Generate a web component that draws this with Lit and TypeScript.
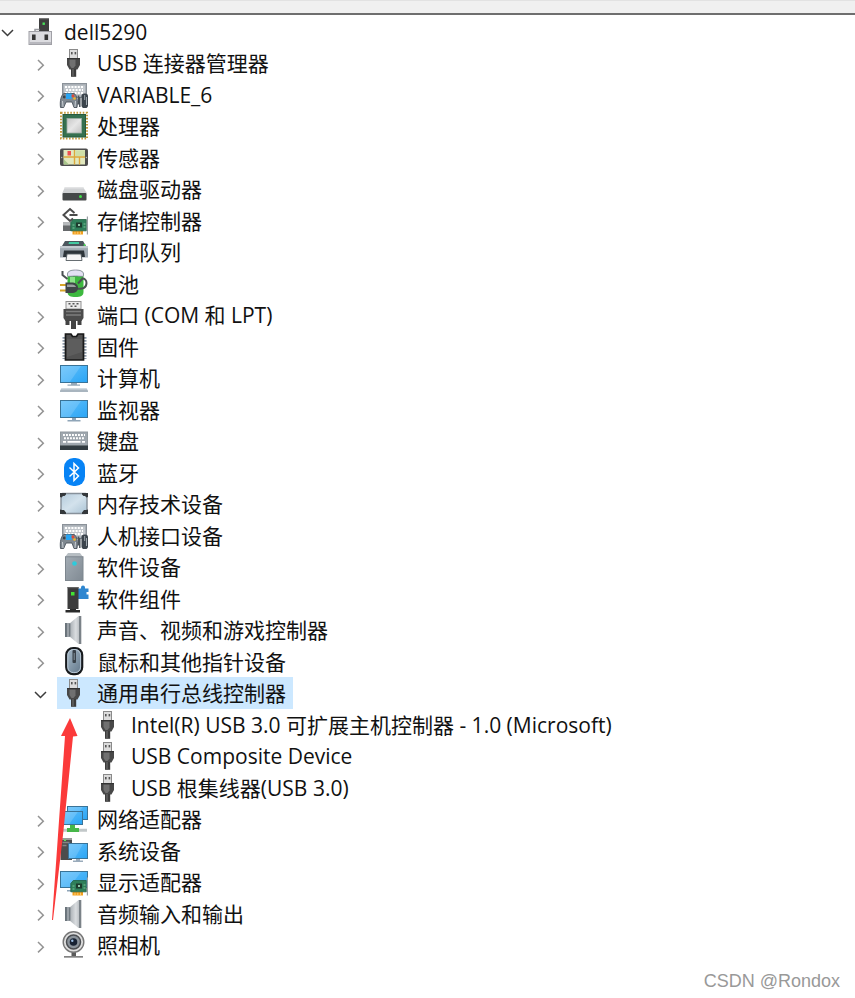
import { LitElement, html, svg, css } from "lit";
import { customElement, property, state } from "lit/decorators.js";
import { classMap } from "lit/directives/class-map.js";

const usb = svg`
  <rect x="9.5" y="0.5" width="8" height="9" fill="#dcdcdc" stroke="#8a8a8a"/>
  <rect x="11" y="3" width="1.6" height="2.4" fill="#555"/><rect x="14.6" y="3" width="1.6" height="2.4" fill="#555"/>
  <path d="M7 9h13v7l-2.500 4.500h-8L7 16z" fill="#484848"/>
  <path d="M9.500 10.500h6v6l-2 2.500h-2l-2-3z" fill="#707070"/>
  <path d="M7 9h13v1.2H7z" fill="#333"/>
  <rect x="11" y="20" width="5.2" height="7.8" fill="#3c3c3c"/><rect x="12.2" y="20" width="1.6" height="7.8" fill="#606060"/>`;

const screen = (x: number, y: number, w: number, h: number) => svg`
  <rect x=${x + 0.5} y=${y + 0.5} width=${w - 1} height=${h - 1} fill="url(#sky)" stroke="#3a7397"/>
  <path d="M${x + 1} ${y + h - 1}L${x + w * 0.35} ${y + h - 1}L${x + w * 0.75} ${y + 1}L${x + 1} ${y + 1}z" fill="#fff" opacity="0.16"/>`;

const card = svg`
  <path d="M12.500 23.500h10.500v4H12.500z" fill="#f3a01d"/>
  <path d="M15 24.500v3M17.800 24.500v3M20.500 24.500v3" stroke="#fbd68c" stroke-width="0.800"/>
  <path d="M10.800 15.500l2.500-3h13v11.300h-15.500z" fill="#2f7f5a" stroke="#225f43" stroke-width="0.800"/>
  <rect x="16" y="15.500" width="6" height="5" fill="#1d3a2d"/><rect x="18" y="17" width="2" height="2" fill="#8fc8a8"/>
  <path d="M12.500 18h2M12.500 21h2M23.500 17h2M23.500 20h2" stroke="#7cc79a"/>
  <rect x="26.800" y="9.500" width="1.200" height="18" fill="#9a9fa3"/>`;

const speaker = svg`
  <rect x="5.200" y="7" width="6" height="14" fill="#9aa1a7"/><rect x="5.200" y="7" width="1.500" height="14" fill="#5a646c"/>
  <path d="M9.500 7.500L18.500 0H20v28h-1.500l-9-7.500z" fill="url(#steel)"/>
  <path d="M9.800 7.500v13" stroke="#5f686f"/>
  <rect x="19" y="0" width="2.300" height="28" fill="#7b8288"/>`;

const hid = svg`
  <rect x="2.500" y="2.500" width="24" height="14" fill="#a9afb6" stroke="#8b9299"/>
  <path d="M4 4.500h21v10H4z" fill="#c3c8cd"/>
  <path d="M5 6h19M6 9h17M5 12h19" stroke="#fff" stroke-width="1.800" stroke-dasharray="2 1.200"/>
  <path d="M.5 26.500C-.3 20 1 14 4 12.500h10c3 1.500 4 7.500 3 14h-3l-2-5.500H6l-2.300 5.500z" fill="#7f8890" stroke="#4b545c" stroke-width="0.900"/>
  <path d="M2.500 20l.5 6M15.500 20L15 26" stroke="#c8cdd2"/>
  <rect x="6" y="12.500" width="5.500" height="5.500" fill="#29a4f2"/><circle cx="4.200" cy="16" r="1.400" fill="#38434d"/>
  <circle cx="13" cy="15" r="1.400" fill="#e04838"/><circle cx="14.500" cy="17.500" r="1.300" fill="#efb42b"/>
  <path d="M18.500 14.500v9M19.800 16v10" stroke="#4b545b" stroke-width="1.500"/>
  <rect x="21.500" y="12.500" width="6.500" height="14.500" rx="2.800" fill="#3b444c"/><path d="M24.700 14v5M26.500 16v8" stroke="#9ea7ae"/>`;

const icons = {
  usb, speaker, hid,
  root: svg`
    <rect x="12" y="0" width="10" height="14" fill="#3e3e3e"/><rect x="12" y="0" width="10" height="1.200" fill="#777"/>
    <rect x="15.500" y="4.500" width="2.400" height="2.400" fill="#47e257"/>
    <path d="M8 14V11.500h4.500" fill="none" stroke="#9b9ca1" stroke-width="1.500"/>
    <rect x="2" y="13.500" width="22.500" height="13" fill="#dcdce0" stroke="#a0a0a6"/>
    <path d="M2.500 24h21.500v2H2.500z" fill="#b8b8be"/>
    <rect x="5" y="16.500" width="3.600" height="5.500" fill="#353535"/><rect x="17.500" y="16.500" width="3.600" height="5.500" fill="#353535"/>`,
  cpu: svg`
    <rect x="1" y="0.800" width="26" height="25.800" fill="none" stroke="#c39b3e" stroke-width="2" stroke-dasharray="1.600 1.500"/>
    <rect x="3" y="2.500" width="22.500" height="22.500" fill="#35704f" stroke="#255a3d"/>
    <rect x="7" y="6.500" width="14.500" height="14.500" fill="url(#silver)" stroke="#9fb0a5" stroke-width="0.800"/>`,
  sensor: svg`
    <rect x="0" y="4.500" width="28" height="17.500" rx="2" fill="#4d4d4d"/>
    <rect x="3.500" y="6" width="21.500" height="14.500" fill="#e2e9bf"/>
    <path d="M3.500 13h21.500M14.500 6v14.500M19.500 13v7.500" stroke="#dda83b" stroke-width="1.400"/>
    <path d="M4 15.500l5 5H4z" fill="#a9c78c"/><path d="M15.500 6.500H25v5.500h-9.500z" fill="#cfe0a8"/>
    <rect x="7.500" y="7" width="3.500" height="4.500" fill="#ef5252"/>
    <circle cx="1.700" cy="13.500" r="0.700" fill="#bbb"/><circle cx="26.400" cy="13.500" r="0.700" fill="#bbb"/>`,
  disk: svg`
    <path d="M5 12h18l3.500 5.500v2h-24v-2z" fill="#cfd1d3"/><path d="M5 12h18l1 1.500H4z" fill="#e3e4e5"/>
    <rect x="2.500" y="18" width="24" height="7.500" rx="1" fill="#454849"/>
    <circle cx="20.500" cy="21.500" r="1.500" fill="#3ee047"/>`,
  storage: svg`
    <path d="M3 15.500h10v8.500H3z" fill="#66696b"/><path d="M3 15.500h10v3H3z" fill="#b7babc"/>
    <path d="M14.500 6L10 2 3.500 8l6.500 6 3-2.500M9.500 8h8" fill="none" stroke="#4b4b4b" stroke-width="2"/>${card}`,
  printer: svg`
    <path d="M5 3h18l3 5H2z" fill="#4c565d"/><path d="M9 4h10v2H8.500z" fill="#43c9a1"/>
    <path d="M0 8h28v11.500H0z" fill="#a0a9b1"/><path d="M0 8h28v2.200H0z" fill="#c3cad0"/>
    <path d="M4 12.500h20l1 6.500H3z" fill="#2d3439"/>
    <path d="M7 16h14l1 6.500H6z" fill="#f5f5f5" stroke="#565d62" stroke-width="0.900"/>
    <circle cx="24.500" cy="7" r="1" fill="#46df52"/>`,
  battery: svg`
    <path d="M7.500 4c0-3 4-4 8-4s8 1 8 4v18c0 4-3 5-8 5s-8-1-8-5z" fill="#3db83f"/>
    <path d="M7.500 4c0-3 4-4 8-4s8 1 8 4v1.500c0 1.500-4 .5-8 .5s-8 1-8-.5z" fill="#e3e1f2" stroke="#77768c" stroke-width="0.700"/>
    <path d="M10 7h5v6h-5z" fill="#8ee38a"/>
    <path d="M2.500 1v4l5 4M17 18.500c6 1 9.500-1 9.500-5.500 0-3-2-4.500-4-4.500l-4.500 5" fill="none" stroke="#4b5153" stroke-width="2"/>
    <path d="M0 15h7M0 20.500h7" stroke="#d7a528" stroke-width="2"/>
    <path d="M5.500 12.500h6c4 0 6.500 2 6.500 5.200 0 3.300-2.500 5.300-6.500 5.300h-6z" fill="#3f4547"/>
    <path d="M7 14.500h5c2 0 3.500 1 4 2.500H7z" fill="#9aa0a1"/>`,
  port: svg`
    <rect x="6" y="0.500" width="15" height="7.500" fill="#ededed" stroke="#919191"/>
    <path d="M8.500 2.700h2M12.500 2.700h2M16.500 2.700h2M10.500 5.200h2M14.500 5.200h2" stroke="#555" stroke-width="1.400"/>
    <path d="M3.500 8h20v9l-2 3H5.500l-2-3z" fill="#4c4c4c"/><path d="M6 10.500h15M6 14h15" stroke="#7d7d7d" stroke-width="1.500"/>
    <path d="M5.500 19h4v5h-4zM17.500 19h4v5h-4zM11 19h5v9h-5z" fill="#434343"/>`,
  firmware: svg`
    <path d="M4.500 4v22M24.500 4v22" stroke="#8f9cab" stroke-width="4" stroke-dasharray="1.700 1.300"/>
    <path d="M5.500 1h5.500l1.500 2.500h4L18 1h5.500v26h-18z" fill="#525252" stroke="#191919" stroke-width="1.700"/>
    <path d="M7 6h15v13L7 24z" fill="#666" opacity="0.600"/>`,
  computer: svg`${screen(0, 1, 28, 18)}
    <path d="M11 19h6v1.500h3v1.300H7.500v-1.300H11z" fill="#97a9b8"/>
    <path d="M2 24h24l2 2.500v1.500H0v-1.500z" fill="#a9b5bf"/><path d="M2 24h24l1 1.500H1z" fill="#d2dae0"/>`,
  monitor: svg`${screen(0, 4, 28, 18)}
    <path d="M12 22h4v2h4.500v1.500H7.500V24H12z" fill="#8fa5b8"/>`,
  keyboard: svg`
    <rect x="0.500" y="5" width="27" height="14" fill="#9fa7ae" stroke="#929a9f"/><path d="M0 18.500h28V23H0z" fill="#323c41"/>
    <path d="M3 8h22M4 11.300h20" stroke="#fff" stroke-width="1.900" stroke-dasharray="1.900 1.100"/>
    <path d="M3 14.800h3M22 14.800h3M7.500 14.800h13" stroke="#fff" stroke-width="1.700"/>`,
  bluetooth: svg`
    <rect x="4" y="-1" width="21" height="28" rx="9.500" fill="#0783f5"/>
    <path d="M9.500 8.500l9 8.500-4.500 4.500V4.500L18.500 9l-9 8.500" fill="none" stroke="#fff" stroke-width="1.500"/>`,
  memory: svg`
    <rect x="1" y="3.500" width="26" height="20" rx="1.500" fill="url(#ice)" stroke="#87919a" stroke-width="1.400"/>
    <path d="M0 7V3h6v1.500L4.500 6H3L1.500 7.500zM28 7V3h-6v1.500L23.500 6H25l1.500 1.500zM0 19.500V24h6v-1.500L4 20H2zM28 19.500V24h-6v-1.500L24 20h2z" fill="#34383b"/>`,
  softdev: svg`
    <path d="M8 0h12l3 4H5z" fill="#b7bec3"/><rect x="5.500" y="3.800" width="17.500" height="23.700" fill="url(#tower)" stroke="#7d868e"/>
    <circle cx="14.500" cy="10.500" r="2.300" fill="#2ccbdc"/>`,
  softcomp: svg`
    <path d="M18 3.500h3V2.500a2 2 0 0 1 4 0v1h3.500V7h-2v2.500h2V14H18v-3h-1.500V7H18z" fill="#2e86d0"/>
    <rect x="7.500" y="2" width="11" height="22" fill="#3b3b3b"/><path d="M7.500 2h11v1.200h-11z" fill="#666"/>
    <rect x="11" y="7" width="3.500" height="3.500" fill="#42e332"/>
    <path d="M10 24h6v1h4v2.500H5.500V25H10z" fill="#2a2a2a"/>`,
  mouse: svg`
    <rect x="6.200" y="0" width="16" height="26.200" rx="7" fill="url(#shell)" stroke="#171a1d" stroke-width="2.200"/>
    <rect x="7.800" y="1.600" width="12.800" height="23" rx="5.500" fill="none" stroke="#bccbd8" stroke-width="1"/>
    <rect x="12.500" y="2" width="3.500" height="13" rx="1" fill="#384048"/><path d="M14.200 5v7" stroke="#85919b"/>`,
  network: svg`
    <path d="M1 24.500h26M1 26h26" stroke="#c2c8c9" stroke-width="1.500"/>
    ${screen(7, 1, 21, 14)}${screen(2, 6, 21, 14)}
    <path d="M10 20h5v3h4v4H7v-4h3z" fill="#47b74a"/>`,
  system: svg`
    <rect x="0.500" y="1" width="11.500" height="22" fill="#4c4c4c"/><path d="M0.500 1h11.500v2H.5z" fill="#9a9a9a"/>
    <path d="M2.500 5.500h7M2.500 8.500h4" stroke="#858585" stroke-width="1.300"/><rect x="4" y="2.500" width="2" height="1.500" fill="#5de15b"/>
    ${screen(8, 6, 20, 16)}<path d="M16 22h4v1.500h3V25H13v-1.500h3z" fill="#9aabbb"/>`,
  display: svg`${screen(0, 3, 28, 17)}<path d="M7 22h6v1.500H7z" fill="#8fa5b8"/>${card}`,
  camera: svg`
    <path d="M11.500 21h4.500v4h7v2H4v-2h7.500z" fill="#5a5a5a"/><path d="M4 25.500h19v1.500H4z" fill="#aaa"/>
    <circle cx="13.500" cy="11" r="10.300" fill="#dedede" stroke="#767676" stroke-width="1.400"/>
    <circle cx="13.500" cy="11" r="7" fill="#8b939b" stroke="#4b4e52" stroke-width="1.500"/>
    <circle cx="13.500" cy="11" r="3.800" fill="#172233"/><circle cx="12.300" cy="9.800" r="1.200" fill="#9dbfe6"/>`,
};

type IconName = keyof typeof icons;

interface Device {
  label: string;
  icon: IconName;
  children?: Device[];
}

const computer: Device = {
  label: "dell5290",
  icon: "root",
  children: [
    { label: "USB 连接器管理器", icon: "usb" },
    { label: "VARIABLE_6", icon: "hid" },
    { label: "处理器", icon: "cpu" },
    { label: "传感器", icon: "sensor" },
    { label: "磁盘驱动器", icon: "disk" },
    { label: "存储控制器", icon: "storage" },
    { label: "打印队列", icon: "printer" },
    { label: "电池", icon: "battery" },
    { label: "端口 (COM 和 LPT)", icon: "port" },
    { label: "固件", icon: "firmware" },
    { label: "计算机", icon: "computer" },
    { label: "监视器", icon: "monitor" },
    { label: "键盘", icon: "keyboard" },
    { label: "蓝牙", icon: "bluetooth" },
    { label: "内存技术设备", icon: "memory" },
    { label: "人机接口设备", icon: "hid" },
    { label: "软件设备", icon: "softdev" },
    { label: "软件组件", icon: "softcomp" },
    { label: "声音、视频和游戏控制器", icon: "speaker" },
    { label: "鼠标和其他指针设备", icon: "mouse" },
    {
      label: "通用串行总线控制器",
      icon: "usb",
      children: [
        { label: "Intel(R) USB 3.0 可扩展主机控制器 - 1.0 (Microsoft)", icon: "usb" },
        { label: "USB Composite Device", icon: "usb" },
        { label: "USB 根集线器(USB 3.0)", icon: "usb" },
      ],
    },
    { label: "网络适配器", icon: "network" },
    { label: "系统设备", icon: "system" },
    { label: "显示适配器", icon: "display" },
    { label: "音频输入和输出", icon: "speaker" },
    { label: "照相机", icon: "camera" },
  ],
};

@customElement("device-icon")
class DeviceIcon extends LitElement {
  @property() name: IconName = "usb";

  static styles = css`
    :host { display: block; width: 28px; height: 28px; }
    .art { display: block; width: 28px; height: 28px; overflow: visible; }
  `;

  render() {
    return html`<svg class="art" viewBox="0 0 28 28" aria-hidden="true">
      <defs>
        <linearGradient id="sky" x1="0" y1="0" x2="1" y2="1"><stop offset="0" stop-color="#62c0fb"/><stop offset="1" stop-color="#2aa5f5"/></linearGradient>
        <linearGradient id="steel"><stop offset="0" stop-color="#a6acb1"/><stop offset="0.600" stop-color="#dadde0"/><stop offset="1" stop-color="#b4b9bd"/></linearGradient>
        <linearGradient id="tower" x1="0" y1="0" x2="1" y2="1"><stop offset="0" stop-color="#a3acb4"/><stop offset="1" stop-color="#808a93"/></linearGradient>
        <linearGradient id="shell" x1="0" y1="0" x2="1" y2="1"><stop offset="0" stop-color="#a9bccb"/><stop offset="1" stop-color="#5f7487"/></linearGradient>
        <linearGradient id="silver" x1="0" y1="0" x2="1" y2="1"><stop offset="0" stop-color="#c6c6c6"/><stop offset="0.500" stop-color="#e6e6e6"/><stop offset="1" stop-color="#c2c2c2"/></linearGradient>
        <linearGradient id="ice" x1="0" y1="0" x2="1" y2="1"><stop offset="0" stop-color="#b4cbdb"/><stop offset="0.500" stop-color="#d3e2ec"/><stop offset="1" stop-color="#aac3d4"/></linearGradient>
      </defs>
      ${icons[this.name]}
    </svg>`;
  }
}

@customElement("app-root")
class AppRoot extends LitElement {
  @state() private open = new Set<string>(["dell5290", "通用串行总线控制器"]);
  @state() private selected = "通用串行总线控制器";

  static styles = css`
    :host {
      display: block;
      background: #fff;
      color: #111;
      font-family: "Open Sans", "Noto Sans CJK SC", sans-serif;
    }
    .toolbar {
      height: 12px;
      background: #f0f0f0;
      border-top: 1px solid #e2e2e2;
      border-bottom: 2px solid #6e6e6e;
    }
    .pane { position: relative; padding-top: 1px; }
    .tree {
      list-style: none;
      margin: 0;
      padding: 0;
      display: grid;
      grid-auto-rows: 31px 32px;
    }
    .row { display: flex; align-items: stretch; min-width: 0; }
    .level-1 { padding-left: 33px; }
    .level-2 { padding-left: 67px; }
    .toggle, .item {
      font: inherit;
      color: inherit;
      background: none;
      border: 0;
      padding: 0;
      margin: 0;
      cursor: default;
    }
    .toggle, .blank { flex: none; width: 16px; margin-right: 8px; }
    .chevron { display: block; width: 16px; height: 31px; fill: none; stroke: #949494; stroke-width: 1.5; }
    .expanded { stroke: #3c3c3c; }
    .item {
      display: flex;
      align-items: flex-start;
      gap: 9px;
      padding: 0 7px 0 3px;
    }
    .selected { background: #cce8ff; }
    .icon { flex: none; margin-top: 2px; }
    .label { font-size: 21px; line-height: 32px; height: 31px; white-space: pre; }
    .arrow {
      position: absolute;
      left: 52px;
      top: 703px;
      width: 26px;
      height: 203px;
      pointer-events: none;
    }
    .credit {
      margin: 0;
      padding: 3px 15px 0 0;
      text-align: right;
      font: 18px/34px "Liberation Sans", sans-serif;
      color: #999;
    }
  `;

  private toggle(label: string) {
    const next = new Set(this.open);
    if (!next.delete(label)) next.add(label);
    this.open = next;
  }

  private row(device: Device, level: number): unknown[] {
    const isOpen = this.open.has(device.label);
    const isSelected = this.selected === device.label;
    const rows: unknown[] = [
      html`<li class="row level-${level}" role="treeitem" aria-level=${level + 1} aria-selected=${isSelected}>
        ${level === 2
          ? html`<span class="blank"></span>`
          : html`<button class="toggle" aria-label=${"展开或折叠 " + device.label} aria-expanded=${isOpen} @click=${() => this.toggle(device.label)}>
              <svg class=${classMap({ chevron: true, expanded: isOpen })} viewBox="0 0 16 31">
                <path d=${isOpen ? "M2 14L7.500 19.500L13 14" : "M5 12L10.300 17.200L5 22.400"}></path>
              </svg>
            </button>`}
        <button class=${classMap({ item: true, selected: isSelected })} @click=${() => (this.selected = device.label)}>
          <device-icon class="icon" .name=${device.icon}></device-icon>
          <span class="label">${device.label}</span>
        </button>
      </li>`,
    ];
    if (isOpen) for (const child of device.children ?? []) rows.push(...this.row(child, level + 1));
    return rows;
  }

  render() {
    return html`
      <header class="toolbar"></header>
      <main class="pane">
        <ul class="tree" role="tree">${this.row(computer, 0)}</ul>
        <svg class="arrow" viewBox="0 0 26 203" aria-hidden="true">
          <path d="M18 0L25.500 18L21 18.500L11 117L1 202L0 202L6 117L13 18L9 18z" fill="#fb3a3a"></path>
        </svg>
      </main>
      <p class="credit">CSDN @Rondox</p>
    `;
  }
}
